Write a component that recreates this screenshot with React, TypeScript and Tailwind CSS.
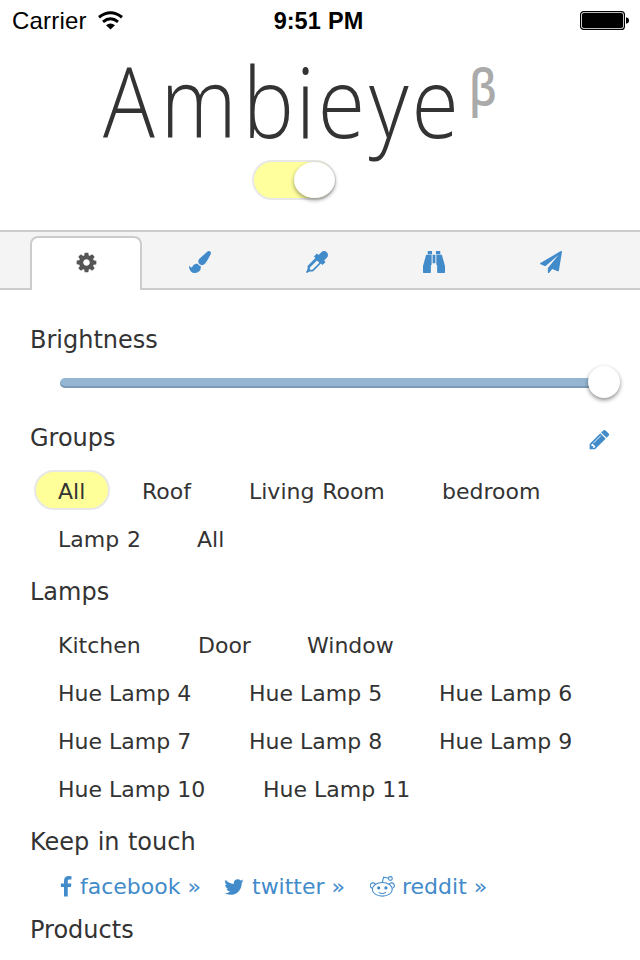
import React from "react";

const P = {
  cog: "M1152 896q0-106-75-181t-181-75-181 75-75 181 75 181 181 75 181-75 75-181zm512-109v222q0 12-8 23t-20 13l-185 28q-19 54-39 91 35 50 107 138 10 12 10 25t-9 23q-27 37-99 108t-94 71q-12 0-26-9l-138-108q-44 23-91 38-16 136-29 186-7 28-36 28h-222q-14 0-24.5-8.5t-11.5-21.5l-28-184q-49-16-90-37l-141 107q-10 9-25 9-14 0-25-11-126-114-165-168-7-10-7-23 0-12 8-23 15-21 51-66.5t54-70.5q-27-50-41-99l-183-27q-13-2-21-12.5t-8-23.5v-222q0-12 8-23t19-13l186-28q14-46 39-92-40-57-107-138-10-12-10-24 0-10 9-23 26-36 98.5-107.5t94.5-71.5q13 0 26 10l138 107q44-23 91-38 16-136 29-186 7-28 36-28h222q14 0 24.5 8.5t11.5 21.5l28 184q49 16 90 37l142-107q9-9 24-9 13 0 25 10 129 119 165 170 7 8 7 22 0 12-8 23-15 21-51 66.5t-54 70.5q26 50 41 98l183 28q13 2 21 12.5t8 23.5z",
  brush: "M1615 0q70 0 122.5 46.5t52.5 116.5q0 63-45 151-332 629-465 752-97 91-218 91-126 0-216.5-92.5t-90.5-219.5q0-128 92-212l638-579q59-54 130-54zm-909 1034q39 76 106.5 130t150.5 76l1 71q4 213-129.5 347t-348.5 134q-123 0-218-46.5t-152.5-127.5-86.5-183-29-220q7 5 41 30t62 44.5 59 36.5 46 17q41 0 55-37 25-66 57.5-112.5t69.5-76 88-47.5 103-25.5 125-10.5z",
  dropper: "M1698 94q94 94 94 226.5t-94 225.5l-225 223 104 104q10 10 10 23t-10 23l-210 210q-10 10-23 10t-23-10l-105-105-603 603q-37 37-90 37h-203l-256 128-64-64 128-256v-203q0-53 37-90l603-603-105-105q-10-10-10-23t10-23l210-210q10-10 23-10t23 10l104 104 223-225q93-94 225.5-94t226.5 94zm-1186 1442l576-576-192-192-576 576v192h192z",
  binoculars: "M704 300v788q0 26-19 45t-45 19v576q0 26-19 45t-45 19h-512q-26 0-45-19t-19-45v-512l249-893q7-23 31-23h424zm305 0v704h-226v-704h226zm783 916v512q0 26-19 45t-45 19h-512q-26 0-45-19t-19-45v-576q-26 0-45-19t-19-45v-788h424q24 0 31 23zm-1056-1184v224h-352v-224q0-14 9-23t23-9h288q14 0 23 9t9 23zm672 0v224h-352v-224q0-14 9-23t23-9h288q14 0 23 9t9 23z",
  plane: "M1764 11q33 24 27 64l-256 1536q-5 29-32 45-14 8-31 8-11 0-24-5l-453-185-242 295q-18 23-49 23-13 0-22-4-19-7-30.5-23.5t-11.5-36.5v-349l864-1059-1069 925-395-162q-37-14-40-55-2-40 32-59l1664-960q15-9 32-9 20 0 36 11z",
  pencil: "M491 1536l91-91-235-235-91 91v107h128v128h107zm523-928q0-22-22-22-10 0-17 7l-542 542q-7 7-7 17 0 22 22 22 10 0 17-7l542-542q7-7 7-17zm-54-192l416 416-832 832h-416v-416zm683 96q0 53-37 90l-166 166-416-416 166-165q36-38 90-38 53 0 91 38l235 234q37 39 37 91z",
  facebook: "M1343 12v264h-157q-86 0-116 36t-30 108v189h293l-39 296h-254v759h-306v-759h-255v-296h255v-218q0-186 104-288.5t277-102.5q147 0 228 12z",
  twitter: "M1684 408q-67 98-162 167 1 14 1 42 0 130-38 259.5t-115.5 248.5-184.5 210.5-258 146-323 54.5q-271 0-496-145 35 4 78 4 225 0 401-138-105-2-188-64.5t-114-159.5q33 5 61 5 43 0 85-11-112-23-185.5-111.5t-73.5-205.5v-4q68 38 146 41-66-44-105-115t-39-154q0-88 44-163 121 149 294.5 238.5t371.5 99.5q-8-38-8-74 0-134 94.5-228.5t228.5-94.5q140 0 236 102 109-21 205-78-37 115-142 178 93-10 186-50z",
};

function Icon({ d, className = "size-[22px]" }: { d: string; className?: string }) {
  return (
    <svg viewBox="0 0 1792 1792" fill="currentColor" className={`shrink-0 ${className}`}>
      <path d={d} />
    </svg>
  );
}

function StatusBar() {
  return (
    <div className="flex h-10 items-center pl-3 pr-[11px] font-['Liberation_Sans',sans-serif] text-[24px] leading-none text-black">
      <div className="flex flex-1 items-center gap-[11px]">
        <span className="pt-[2px] tracking-[0.2px]">Carrier</span>
        <svg width="25" height="19" viewBox="0 0 25 19" fill="none" stroke="#000" strokeWidth="3">
          <path d="M1 6.3Q12.5-2.8 24 6.3" />
          <path d="M5 10.8Q12.5 4.6 20 10.8" />
          <path d="M12.5 18.5L8 14.3Q12.5 10.7 17 14.3Z" fill="#000" stroke="none" />
        </svg>
      </div>
      <span className="pr-1 pt-[3px] text-[23.5px] font-bold">9:51 PM</span>
      <div className="flex flex-1 justify-end">
        <svg width="49" height="19" viewBox="0 0 49 19">
          <rect x="0.6" y="0.6" width="43.8" height="17.8" rx="3" fill="#fff" stroke="#000" strokeWidth="1.2" />
          <rect x="2" y="2" width="41" height="15" rx="1.8" />
          <path d="M46 6.2Q49 6.8 49 9.5T46 12.8Z" />
        </svg>
      </div>
    </div>
  );
}

function Header() {
  return (
    <header className="flex h-[190px] flex-col items-center">
      <h1 className="ml-[103px] flex h-[120px] items-start self-start pt-[11px] font-['Open_Sans',sans-serif] font-light leading-none text-[#333]">
        <span className="w-[366px]">
          <span className="inline-block origin-left scale-x-[0.88] whitespace-nowrap text-[98px]">
            <span className="tracking-[6.4px]">A</span>
            <span className="tracking-[6.9px]">m</span>
            <span className="tracking-[1.9px]">b</span>
            <span className="tracking-[2.9px]">i</span>
            <span className="tracking-[4.4px]">e</span>
            <span className="tracking-[3.2px]">y</span>
            <span>e</span>
          </span>
        </span>
        <sup className="top-0 pt-[11px] text-[50px] font-semibold leading-none text-[#aaa]">
          <span className="inline-block origin-left scale-x-[0.85]">β</span>
        </sup>
      </h1>
      <div className="ml-[-52px] flex h-10 w-[84px] justify-end rounded-full border-2 border-[#e8e8e8] bg-[#ffff9e]">
        <div className="mr-[-1px] h-9 w-[41px] rounded-[50%] bg-white shadow-[0_2px_4px_rgba(0,0,0,0.4)]" />
      </div>
    </header>
  );
}

function Tabs() {
  return (
    <nav className="flex h-[60px] border-y-2 border-[#ccc] bg-[#f4f4f4] pl-[30px] text-[#428bca]">
      <div className="-mb-0.5 mt-1 flex w-28 items-center justify-center rounded-t-[8px] border-2 border-b-0 border-[#ccc] bg-white pb-[3px] pl-px text-[#555]">
        <Icon d={P.cog} className="size-[23px]" />
      </div>
      <div className="flex pl-px">
        {[P.brush, P.dropper, P.binoculars, P.plane].map((d, i) => (
          <div key={i} className="flex w-[117px] items-center justify-center pr-[3px] pt-1">
            <Icon d={d} />
          </div>
        ))}
      </div>
    </nav>
  );
}

function Heading({ children }: { children: React.ReactNode }) {
  return <h2 className="pl-[30px] text-[24px] leading-[34px]">{children}</h2>;
}

type Item = [string, string];

function Rows({ rows }: { rows: Item[][] }) {
  return (
    <div className="flex flex-col gap-2 pl-[34px]">
      {rows.map((row, i) => (
        <div key={i} className="flex">
          {row.map(([label, width], j) => {
            const active = label === "All" && j === 0;
            return (
              <div key={j} className={`${width} shrink-0`}>
                <span
                  className={`inline-flex h-10 items-center whitespace-nowrap rounded-full border-2 pl-[22px] pr-[23px] pt-[3px] ${
                    active ? "border-[#e8e8e8] bg-[#ffff99]" : "border-transparent"
                  }`}
                >
                  {label}
                </span>
              </div>
            );
          })}
        </div>
      ))}
    </div>
  );
}

const groups: Item[][] = [
  [["All", "w-[84px]"], ["Roof", "w-[107px]"], ["Living Room", "w-[193px]"], ["bedroom", "w-[150px]"]],
  [["Lamp 2", "w-[139px]"], ["All", "w-[84px]"]],
];

const lamps: Item[][] = [
  [["Kitchen", "w-[140px]"], ["Door", "w-[109px]"], ["Window", "w-[150px]"]],
  [["Hue Lamp 4", "w-[191px]"], ["Hue Lamp 5", "w-[190px]"], ["Hue Lamp 6", "w-[190px]"]],
  [["Hue Lamp 7", "w-[191px]"], ["Hue Lamp 8", "w-[190px]"], ["Hue Lamp 9", "w-[190px]"]],
  [["Hue Lamp 10", "w-[205px]"], ["Hue Lamp 11", "w-[200px]"]],
];

function Reddit() {
  return (
    <svg width="25" height="22" viewBox="0 0 25 22" fill="none" stroke="currentColor" strokeWidth="1.1" className="shrink-0">
      <ellipse cx="12.3" cy="13.3" rx="10" ry="6.8" />
      <path d="M2.4 12.2A2.7 2.7 0 1 1 5.4 8.4M19.2 8.4A2.7 2.7 0 1 1 22.2 12.2" />
      <path d="M12.3 6.5L13.6 1.2L18.6 2.2" />
      <circle cx="20.4" cy="2.5" r="1.9" />
      <path d="M8.6 16.4Q12.3 18.6 16 16.4" />
      <circle cx="8.7" cy="11.9" r="1.6" fill="currentColor" stroke="none" />
      <circle cx="15.9" cy="11.9" r="1.6" fill="currentColor" stroke="none" />
    </svg>
  );
}

export default function App() {
  return (
    <div className="h-[960px] w-[640px] overflow-hidden bg-white font-['DejaVu_Sans',sans-serif] text-[22px] leading-none text-[#333] [word-spacing:0.75px]">
      <StatusBar />
      <Header />
      <Tabs />
      <main className="pt-[33px]">
        <Heading>Brightness</Heading>
        <div className="mt-[7px] flex h-9 items-center pl-[60px] pr-5">
          <div className="mt-px h-2.5 flex-1 rounded-l-full bg-[#95b6d3] shadow-[inset_0_-2px_0_#7b9cb4]" />
          <div className="-ml-4 size-8 rounded-full bg-white shadow-[0_2px_4px_rgba(0,0,0,0.45)]" />
        </div>
        <div className="mt-[21px] flex items-start justify-between pr-[29px]">
          <Heading>Groups</Heading>
          <Icon d={P.pencil} className="mt-[7px] size-[23px] text-[#428bca]" />
        </div>
        <div className="mt-[15px]">
          <Rows rows={groups} />
        </div>
        <div className="mt-[17px]">
          <Heading>Lamps</Heading>
        </div>
        <div className="mt-[15px] [word-spacing:0px]">
          <Rows rows={lamps} />
        </div>
        <div className="mt-[17px]">
          <Heading>Keep in touch</Heading>
        </div>
        <div className="mt-[12px] flex h-8 items-center pl-[55px] text-[#428bca] [word-spacing:0px]">
          <a className="flex w-[168px] items-center whitespace-nowrap">
            <Icon d={P.facebook} className="mr-[3px] size-[22px]" />
            facebook »
          </a>
          <a className="flex w-[147px] items-center whitespace-nowrap">
            <Icon d={P.twitter} className="mr-[7px] size-[22px]" />
            twitter »
          </a>
          <a className="flex items-center gap-[7px] whitespace-nowrap">
            <Reddit />
            reddit »
          </a>
        </div>
        <div className="mt-[10px]">
          <Heading>Products</Heading>
        </div>
      </main>
    </div>
  );
}
